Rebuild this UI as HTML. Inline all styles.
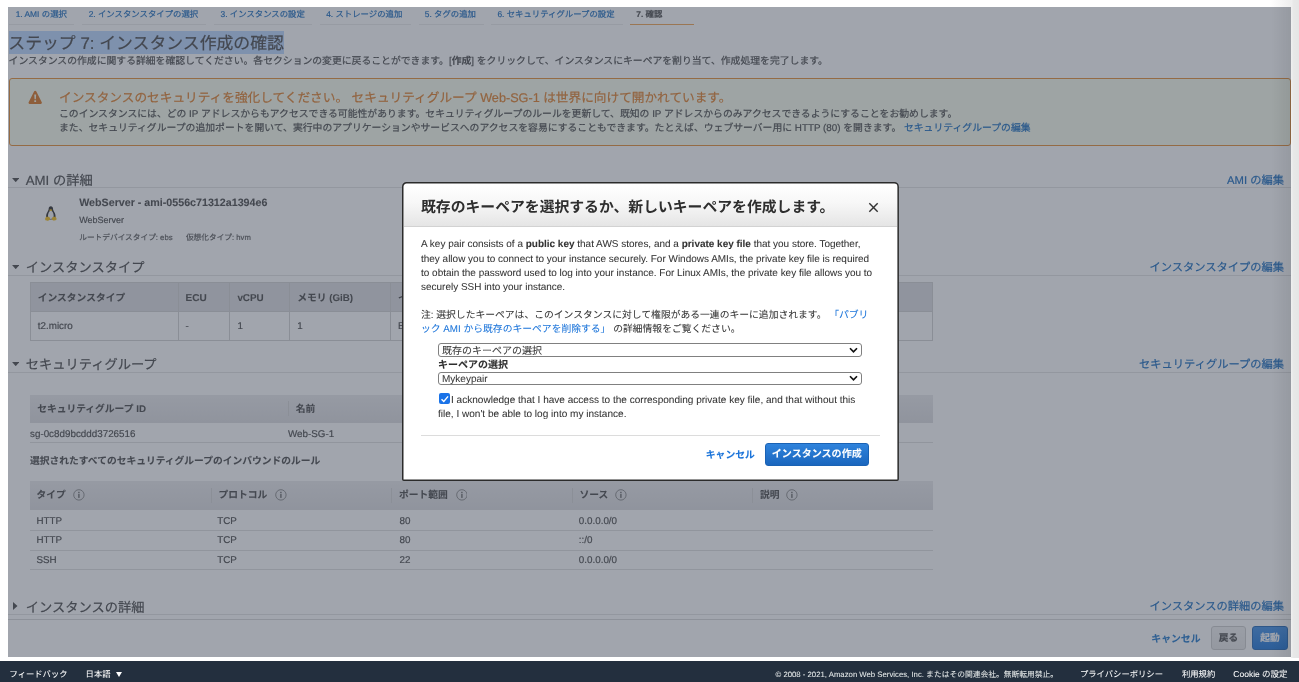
<!DOCTYPE html>
<html lang="ja">
<head>
<meta charset="utf-8">
<title>インスタンス作成の確認</title>
<style>
*{box-sizing:border-box;margin:0;padding:0}
html,body{width:1299px;height:682px;overflow:hidden;background:#fff}
body{position:relative;text-rendering:geometricPrecision;-webkit-text-stroke:.2px;font-family:"Liberation Sans","Noto Sans CJK JP",sans-serif;color:#444;font-size:9.75px;line-height:14px}
.a{position:absolute;white-space:nowrap}
a,.lk{color:#1166bb;text-decoration:none}
b,.b{font-weight:bold;-webkit-text-stroke:.08px}
#page{position:absolute;left:8px;top:6px;width:1284px;height:651px;background:#fff;overflow:hidden}
#ov{position:absolute;left:8.200px;top:6.700px;width:1283.200px;height:650px;background:rgba(68,76,91,.5)}
#ovr{position:absolute;left:1271px;top:7px;width:20px;height:650px;background:linear-gradient(to right,rgba(0,0,0,0),rgba(0,0,0,.07))}
#rstrip{position:absolute;left:1291px;top:0;width:8px;height:658px;background:linear-gradient(to right,#f0f0f0 0,#e8e8e8 2.5px,#e5e5e5 100%)}
#tstrip{position:absolute;left:1270px;top:0;width:21px;height:7px;background:linear-gradient(to right,#fff,#eee)}
#pg{position:absolute;left:-8px;top:-6px;width:1299px;height:682px;will-change:transform}
.tab{position:absolute;top:7px;height:17.5px;border-bottom:1px solid #ebebeb;font-size:8.4px;line-height:13px;color:#1166bb;white-space:nowrap}
.tab span{position:absolute;top:.9px;left:0}
.sech{position:absolute;left:8px;width:1283.400px;height:1px;background:#e2e2e2}
.sect{font-size:13.25px;line-height:18px;color:#444}
.edit{font-size:11.25px;line-height:16px;color:#1166bb;right:15px}
.th{position:absolute;background:#dddde0;font-weight:bold;font-size:9.75px}
.td{font-size:9.83px;line-height:14px}
.th.g{background:linear-gradient(to bottom,#e9e9eb,#dcdcdf)}
.hl{position:absolute;height:1px;background:#dedede}
.vs{position:absolute;width:1px;background:#d0d0d0}
.tri{position:absolute;width:0;height:0;border-style:solid}
.tri.d{border-width:4px 3.300px 0 3.300px;border-color:#444 transparent transparent transparent}
.tri.r{border-width:4px 0 4px 4.5px;border-color:transparent transparent transparent #444}
#footer{-webkit-text-stroke:.05px;position:absolute;left:0;top:660.700px;width:1299px;height:21.300px;background:#232f3e;color:#fff;font-size:8.32px;line-height:12px}
#footer .a{color:#fff}
/* modal */
#modal{position:absolute;left:0;top:0;width:1299px;height:682px;color:#333;-webkit-text-stroke:.06px}
#mo{position:absolute;left:0;top:0;width:1299px;height:682px;will-change:transform}
.sel{position:absolute;left:438px;width:424px;height:13.600px;border:1px solid #808080;border-radius:3px;background:#fff;font-size:10px;line-height:11px;color:#383838;padding-left:3px;padding-top:1.600px;white-space:nowrap}
.sel svg{position:absolute;right:3px;top:2.600px}
</style>
</head>
<body>
<div id="page"><div id="pg">
  <!-- tabs -->
  <div class="tab" style="left:9px;width:65px"><span style="left:6.7px">1. AMI の選択</span></div>
  <div class="tab" style="left:82px;width:124px"><span style="left:6.7px">2. インスタンスタイプの選択</span></div>
  <div class="tab" style="left:214px;width:98px"><span style="left:6.5px">3. インスタンスの設定</span></div>
  <div class="tab" style="left:320px;width:91px"><span style="left:6.2px">4. ストレージの追加</span></div>
  <div class="tab" style="left:418.5px;width:65px"><span style="left:6.3px">5. タグの追加</span></div>
  <div class="tab" style="left:491px;width:131.5px"><span style="left:6.4px">6. セキュリティグループの設定</span></div>
  <div class="tab" style="left:629.5px;width:64px;border-bottom:1.5px solid #f0a04b;color:#444;font-weight:bold;height:18px"><span style="left:6.8px">7. 確認</span></div>

  <!-- heading -->
  <div class="a" style="left:8.5px;top:31px;width:275.300px;height:22.5px;background:#b8d6ff"></div>
  <div class="a" style="left:8.300px;top:32.600px;font-size:16.88px;line-height:21.5px;color:#444">ステップ 7: インスタンス作成の確認</div>
  <div class="a" style="left:8.600px;top:54.600px;font-size:9.83px;line-height:14px">インスタンスの作成に関する詳細を確認してください。各セクションの変更に戻ることができます。[<b>作成</b>] をクリックして、インスタンスにキーペアを割り当て、作成処理を完了します。</div>

  <!-- warning -->
  <div class="a" style="left:9px;top:78px;width:1282px;height:68px;background:#f8fdec;border:1px solid #e58a2e;border-radius:3px"></div>
  <svg class="a" style="left:28px;top:89.900px" width="14.400" height="14.300" viewBox="0 0 29 26" preserveAspectRatio="none"><path d="M14.5 1.2c1 0 1.8.5 2.3 1.4l10.9 19.6c.9 1.7-.3 3.3-2.2 3.3H3.500c-1.900 0-3.100-1.600-2.200-3.300L12.200 2.600c.5-.9 1.300-1.400 2.300-1.400z" fill="#d9701a"/><path d="M12.600 8h3.800l-.6 9h-2.600z M12.700 18.800h3.600v3.200h-3.600z" fill="#f8fdec"/></svg>
  <div class="a" style="left:59px;top:90.100px;font-size:12.66px;line-height:17px;color:#e07b24">インスタンスのセキュリティを強化してください。 セキュリティグループ Web-SG-1 は世界に向けて開かれています。</div>
  <div class="a" style="left:59px;top:107.600px;font-size:9.83px;line-height:13.9px">このインスタンスには、どの IP アドレスからもアクセスできる可能性があります。セキュリティグループのルールを更新して、既知の IP アドレスからのみアクセスできるようにすることをお勧めします。<br>また、セキュリティグループの追加ポートを開いて、実行中のアプリケーションやサービスへのアクセスを容易にすることもできます。たとえば、ウェブサーバー用に HTTP (80) を開きます。 <span class="lk">セキュリティグループの編集</span></div>

  <!-- AMI section -->
  <svg class="a" style="left:11.600px;top:178.1px" width="7.400" height="4.200" viewBox="0 0 14 8"><path d="M0 0H14L7 8z" fill="#444"/></svg>
  <div class="a sect" style="left:25.700px;top:171.900px">AMI の詳細</div>
  <div class="a edit" style="top:172.8px">AMI の編集</div>
  <div class="sech" style="top:187px"></div>
  <svg class="a" style="left:45px;top:205.800px" width="11.700" height="15.200" viewBox="0 0 23 30">
    <path d="M11.500 .5c2.700 0 4.300 2.200 4.300 5 0 2.600 1.300 4.600 2.900 7.500 1.600 2.900 2.500 5.900 2 9-.4 2.600-2.600 4.500-9.200 4.500s-8.800-1.900-9.200-4.500c-.5-3.100.4-6.100 2-9C5.900 10.100 7.200 8.100 7.200 5.500c0-2.800 1.600-5 4.300-5z" fill="#262626"/>
    <path d="M11.500 9.300c2.400 0 3.700 2.200 4.700 5 1 2.900 1.300 6 .4 8.400-.7 1.900-2.400 2.800-5.100 2.800s-4.400-.9-5.100-2.800c-.9-2.400-.6-5.500.4-8.400 1-2.800 2.300-5 4.700-5z" fill="#f4f4f4"/>
    <ellipse cx="11.300" cy="8.200" rx="2.700" ry="1.900" fill="#f2c01c"/>
    <path d="M.6 23.800c.9-2.200 3.200-3.200 5.800-2.400 2.200.7 3.800 2.400 3.600 4.500-.2 1.900-2 2.900-4.600 3.100-2.400.2-4.400-.3-5-1.700-.4-1.100-.2-2.400.2-3.500z M22.400 23.600c-.9-2.100-3-3-5.400-2.300-2.100.6-3.600 2.200-3.500 4.200.1 1.900 1.800 2.900 4.300 3.100 2.300.2 4.200-.4 4.800-1.700.4-1 .2-2.200-.2-3.300z" fill="#f4bc10"/>
  </svg>
  <div class="a b" style="left:79.200px;top:195.600px;font-size:10.7px;line-height:14px">WebServer - ami-0556c71312a1394e6</div>
  <div class="a" style="left:79.200px;top:214.200px;font-size:9px;line-height:12px">WebServer</div>
  <div class="a" style="left:79.200px;top:231.800px;font-size:7.7px;line-height:11px;color:#555">ルートデバイスタイプ: ebs<span style="display:inline-block;width:13.4px"></span>仮想化タイプ: hvm</div>

  <!-- Instance type section -->
  <svg class="a" style="left:11.600px;top:265.0px" width="7.400" height="4.200" viewBox="0 0 14 8"><path d="M0 0H14L7 8z" fill="#444"/></svg>
  <div class="a sect" style="left:25.700px;top:259.200px">インスタンスタイプ</div>
  <div class="a edit" style="top:260.1px">インスタンスタイプの編集</div>
  <div class="sech" style="top:275px"></div>
  <div class="a" style="left:30px;top:282px;width:902.600px;height:59px;border:1px solid #d0d0d0"></div>
  <div class="th" style="left:30.5px;top:282.5px;width:901.600px;height:29px"></div>
  <div class="hl" style="left:30px;top:311px;width:902.600px;background:#d0d0d0"></div>
  <div class="vs" style="left:178px;top:282px;height:59px"></div>
  <div class="vs" style="left:229px;top:282px;height:59px"></div>
  <div class="vs" style="left:289px;top:282px;height:59px"></div>
  <div class="vs" style="left:390px;top:282px;height:59px"></div>
  <div class="vs" style="left:560px;top:282px;height:59px"></div>
  <div class="vs" style="left:690px;top:282px;height:59px"></div>
  <div class="a b" style="left:37.800px;top:291.6px">インスタンスタイプ</div>
  <div class="a b" style="left:185.600px;top:291.6px;font-size:10px">ECU</div>
  <div class="a b" style="left:237.400px;top:291.6px;font-size:9.85px">vCPU</div>
  <div class="a b" style="left:297.300px;top:291.6px">メモリ (GiB)</div>
  <div class="a b" style="left:398px;top:291.6px">インスタンスストレージ (GB)</div>
  <div class="a b" style="left:568px;top:291.6px">EBS 最適化利用</div>
  <div class="a b" style="left:698px;top:291.6px">ネットワークパフォーマンス</div>
  <div class="a td" style="left:37.800px;top:320.4px">t2.micro</div>
  <div class="a td" style="left:185.600px;top:320.4px">-</div>
  <div class="a td" style="left:237.400px;top:320.4px">1</div>
  <div class="a td" style="left:297.300px;top:320.4px">1</div>
  <div class="a td" style="left:398px;top:320.4px">EBS のみ</div>
  <div class="a td" style="left:568px;top:320.4px">-</div>
  <div class="a td" style="left:698px;top:320.4px">Low to Moderate</div>

  <!-- Security group section -->
  <svg class="a" style="left:11.600px;top:361.8px" width="7.400" height="4.200" viewBox="0 0 14 8"><path d="M0 0H14L7 8z" fill="#444"/></svg>
  <div class="a sect" style="left:25.700px;top:356px">セキュリティグループ</div>
  <div class="a edit" style="top:356.9px">セキュリティグループの編集</div>
  <div class="sech" style="top:371.700px"></div>

  <div class="th g" style="left:30px;top:395px;width:902.600px;height:27.600px"></div>
  <div class="vs" style="left:287.5px;top:401px;height:15px;background:#d2d2d2"></div>
  <div class="a b" style="left:37.200px;top:402.7px">セキュリティグループ ID</div>
  <div class="a b" style="left:295.800px;top:402.7px">名前</div>
  <div class="a b" style="left:555px;top:402.7px">説明</div>
  <div class="a td" style="left:30px;top:427.800px">sg-0c8d9bcddd3726516</div>
  <div class="a td" style="left:288px;top:427.800px">Web-SG-1</div>
  <div class="a td" style="left:547px;top:427.3px">Web-SG-1</div>
  <div class="hl" style="left:30px;top:442px;width:902.600px"></div>
  <div class="a b" style="left:30px;top:455.1px">選択されたすべてのセキュリティグループのインバウンドのルール</div>

  <div class="th g" style="left:30px;top:481.200px;width:902.600px;height:29px"></div>
  <div class="vs" style="left:210.5px;top:488px;height:15px;background:#d2d2d2"></div>
  <div class="vs" style="left:391px;top:488px;height:15px;background:#d2d2d2"></div>
  <div class="vs" style="left:571.5px;top:488px;height:15px;background:#d2d2d2"></div>
  <div class="vs" style="left:752px;top:488px;height:15px;background:#d2d2d2"></div>
  <div class="a b" style="left:36.500px;top:488.9px">タイプ</div>
  <div class="a b" style="left:218.600px;top:488.9px">プロトコル</div>
  <div class="a b" style="left:399px;top:488.9px">ポート範囲</div>
  <div class="a b" style="left:579.600px;top:488.9px">ソース</div>
  <div class="a b" style="left:760px;top:488.9px">説明</div>
  <svg class="a ii" style="left:73.4px;top:489px" width="11.800" height="11.800" viewBox="0 0 22 22"><circle cx="11" cy="11" r="9.700" fill="none" stroke="#7a7a7a" stroke-width="1.600"/><rect x="9.700" y="9" width="2.600" height="7.600" fill="#666"/><rect x="9.700" y="5.200" width="2.600" height="2.400" fill="#666"/></svg>
  <svg class="a ii" style="left:274.8px;top:489px" width="11.800" height="11.800" viewBox="0 0 22 22"><circle cx="11" cy="11" r="9.700" fill="none" stroke="#7a7a7a" stroke-width="1.600"/><rect x="9.700" y="9" width="2.600" height="7.600" fill="#666"/><rect x="9.700" y="5.200" width="2.600" height="2.400" fill="#666"/></svg>
  <svg class="a ii" style="left:455.5px;top:489px" width="11.800" height="11.800" viewBox="0 0 22 22"><circle cx="11" cy="11" r="9.700" fill="none" stroke="#7a7a7a" stroke-width="1.600"/><rect x="9.700" y="9" width="2.600" height="7.600" fill="#666"/><rect x="9.700" y="5.200" width="2.600" height="2.400" fill="#666"/></svg>
  <svg class="a ii" style="left:614.9px;top:489px" width="11.800" height="11.800" viewBox="0 0 22 22"><circle cx="11" cy="11" r="9.700" fill="none" stroke="#7a7a7a" stroke-width="1.600"/><rect x="9.700" y="9" width="2.600" height="7.600" fill="#666"/><rect x="9.700" y="5.200" width="2.600" height="2.400" fill="#666"/></svg>
  <svg class="a ii" style="left:786.3px;top:489px" width="11.800" height="11.800" viewBox="0 0 22 22"><circle cx="11" cy="11" r="9.700" fill="none" stroke="#7a7a7a" stroke-width="1.600"/><rect x="9.700" y="9" width="2.600" height="7.600" fill="#666"/><rect x="9.700" y="5.200" width="2.600" height="2.400" fill="#666"/></svg>

  <div class="a td" style="left:36.500px;top:514.5px">HTTP</div>
  <div class="a td" style="left:217.200px;top:514.5px">TCP</div>
  <div class="a td" style="left:399.5px;top:514.5px">80</div>
  <div class="a td" style="left:578.800px;top:514.5px">0.0.0.0/0</div>
  <div class="hl" style="left:30px;top:530px;width:902.600px"></div>
  <div class="a td" style="left:36.500px;top:533.7px">HTTP</div>
  <div class="a td" style="left:217.200px;top:533.7px">TCP</div>
  <div class="a td" style="left:399.5px;top:533.7px">80</div>
  <div class="a td" style="left:578.800px;top:533.7px">::/0</div>
  <div class="hl" style="left:30px;top:549.5px;width:902.600px"></div>
  <div class="a td" style="left:36.500px;top:553.6px">SSH</div>
  <div class="a td" style="left:217.200px;top:553.6px">TCP</div>
  <div class="a td" style="left:399.5px;top:553.6px">22</div>
  <div class="a td" style="left:578.800px;top:553.6px">0.0.0.0/0</div>
  <div class="hl" style="left:30px;top:569px;width:902.600px"></div>

  <!-- Instance details -->
  <svg class="a" style="left:13px;top:602.300px" width="4.500" height="8" viewBox="0 0 9 16"><path d="M0 0L9 8L0 16z" fill="#444"/></svg>
  <div class="a sect" style="left:25.700px;top:598.800px">インスタンスの詳細</div>
  <div class="a edit" style="top:598.800px">インスタンスの詳細の編集</div>
  <div class="sech" style="top:613.800px"></div>
  <div class="sech" style="top:618.5px;background:#d6d6d6"></div>

  <!-- bottom buttons -->
  <div class="a b" style="left:1151.300px;top:633.100px;font-size:9.85px;color:#1a73c8">キャンセル</div>
  <div class="a" style="left:1211px;top:626.300px;width:35px;height:23.700px;border:1px solid #cbcbcb;border-radius:3px;background:linear-gradient(to bottom,#f1f1f1,#e5e5e5);font-size:9.7px;line-height:23.600px;text-align:center;font-weight:bold;color:#444">戻る</div>
  <div class="a" style="left:1252px;top:626.300px;width:36px;height:23.700px;border:1px solid #1a62b4;border-radius:3px;background:linear-gradient(to bottom,#3a8ce6,#1670d6);font-size:9.7px;line-height:23.600px;text-align:center;font-weight:bold;color:#fff">起動</div>
</div></div>

<div id="ov"></div>
<div id="ovr"></div>
<div id="rstrip"></div>
<div id="tstrip"></div>

<!-- modal -->
<div id="modal"><svg id="mframe" style="position:absolute;left:0;top:0" width="1299" height="682" viewBox="0 0 1299 682">
  <path d="M402.75 186.65A3.9 3.9 0 0 1 406.65 182.75H894.25A3.9 3.9 0 0 1 898.15 186.65V479.15A1 1 0 0 1 897.15 480.15H403.75A1 1 0 0 1 402.75 479.15Z" fill="#fff" stroke="#2b2b2b" stroke-width="1.5"/>
</svg>
<div style="position:absolute;left:404px;top:184px;width:493px;height:43px;border-radius:3px 3px 0 0;background:linear-gradient(to bottom,#fff 0%,#f7f7f7 45%,#e5e5e5 100%);border-bottom:1px solid #d2d2d2"></div>
<div id="mo">
  <div class="a b" style="left:421px;top:198.400px;font-size:14.84px;line-height:21px;color:#2e2e2e;-webkit-text-stroke:0">既存のキーペアを選択するか、新しいキーペアを作成します。</div>
  <svg class="a" style="left:867.800px;top:201.500px" width="11" height="11" viewBox="0 0 21 21"><path d="M2.500 2.500L18.5 18.5M18.5 2.500L2.500 18.5" stroke="#333" stroke-width="2.700" fill="none"/></svg>

  <div class="a" style="left:421px;top:238.300px;font-size:9.98px;line-height:14.2px;color:#333">A key pair consists of a <b>public key</b> that AWS stores, and a <b>private key file</b> that you store. Together,<br>they allow you to connect to your instance securely. For Windows AMIs, the private key file is required<br>to obtain the password used to log into your instance. For Linux AMIs, the private key file allows you to<br>securely SSH into your instance.</div>

  <div class="a" style="left:421px;top:308.800px;font-size:9.81px;line-height:14.5px;color:#333">注: 選択したキーペアは、このインスタンスに対して権限がある一連のキーに追加されます。 <span style="color:#1a73d9">「パブリ<br>ック AMI から既存のキーペアを削除する」</span> の詳細情報をご覧ください。</div>

  <div class="sel" style="top:343px">既存のキーペアの選択<svg width="9" height="6" viewBox="0 0 18 12"><path d="M2 2.500L9 9.500L16 2.500" stroke="#111" stroke-width="3.400" fill="none"/></svg></div>
  <div class="a b" style="left:438px;top:358.700px;font-size:10px;line-height:14px;color:#2e2e2e">キーペアの選択</div>
  <div class="sel" style="top:371.900px">Mykeypair<svg width="9" height="6" viewBox="0 0 18 12"><path d="M2 2.500L9 9.500L16 2.500" stroke="#111" stroke-width="3.400" fill="none"/></svg></div>

  <div class="a" style="left:438.5px;top:392.500px;width:11.600px;height:11.800px;background:#1a73e8;border-radius:2px"></div>
  <svg class="a" style="left:438.5px;top:392.600px" width="11.600" height="11.800" viewBox="0 0 23 23"><path d="M5 12L9.500 16.5L18 6.5" stroke="#fff" stroke-width="2.800" fill="none"/></svg>
  <div class="a" style="left:451px;top:393.800px;font-size:10.06px;line-height:14.3px;color:#333">I acknowledge that I have access to the corresponding private key file, and that without this</div>
  <div class="a" style="left:438px;top:408.100px;font-size:10.06px;line-height:14.3px;color:#333">file, I won't be able to log into my instance.</div>

  <div class="hl" style="left:420.5px;top:434.5px;width:459px;background:#dcdcdc"></div>
  <div class="a b" style="left:705.800px;top:448.600px;font-size:9.8px;line-height:14px;color:#1a73d9">キャンセル</div>
  <div class="a" style="left:764.5px;top:443.300px;width:104.5px;height:22.7px;border:1px solid #1a62b4;border-radius:3px;background:linear-gradient(to bottom,#2f83dc,#1a66be);font-size:10.05px;line-height:22.600px;text-align:center;font-weight:bold;color:#fff">インスタンスの作成</div>
</div></div>

<!-- footer -->
<div id="footer"><div style="position:absolute;left:0;top:0;width:1299px;height:21px;will-change:transform">
  <div class="a" style="left:9.5px;top:6.800px">フィードバック</div>
  <div class="a" style="left:85.600px;top:6.800px">日本語</div>
  <div class="tri" style="left:115.700px;top:10.600px;border-width:5.800px 3.900px 0 3.900px;border-color:#fff transparent transparent transparent"></div>
  <div class="a" style="left:775.5px;top:8.300px;font-size:7.78px;color:#e4e8e8">© 2008 - 2021, Amazon Web Services, Inc. またはその関連会社。無断転用禁止。</div>
  <div class="a" style="left:1080px;top:6.800px">プライバシーポリシー</div>
  <div class="a" style="left:1182px;top:6.800px">利用規約</div>
  <div class="a" style="left:1233.300px;top:6.800px;font-size:8.5px">Cookie の設定</div>
</div></div>
</body>
</html>
